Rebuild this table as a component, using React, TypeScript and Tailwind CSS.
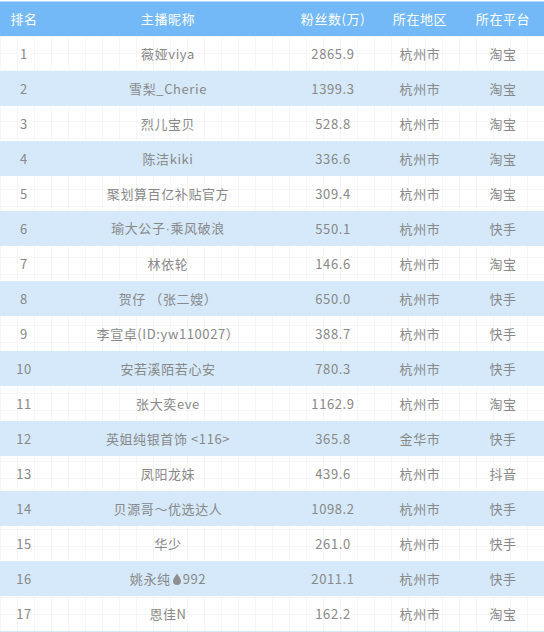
import React from "react";

// 主播排行数据
const rows: [string, React.ReactNode, string, string, string][] = [
  ["1", "薇娅viya", "2865.9", "杭州市", "淘宝"],
  ["2", "雪梨_Cherie", "1399.3", "杭州市", "淘宝"],
  ["3", "烈儿宝贝", "528.8", "杭州市", "淘宝"],
  ["4", "陈洁kiki", "336.6", "杭州市", "淘宝"],
  ["5", "聚划算百亿补贴官方", "309.4", "杭州市", "淘宝"],
  [
    "6",
    <>
      瑜大公子<span style={{ fontFamily: '"Liberation Sans", sans-serif' }}>·</span>乘风破浪
    </>,
    "550.1",
    "杭州市",
    "快手",
  ],
  ["7", "林依轮", "146.6", "杭州市", "淘宝"],
  ["8", "贺仔 （张二嫂）", "650.0", "杭州市", "快手"],
  ["9", "李宣卓(ID:yw110027）", "388.7", "杭州市", "快手"],
  ["10", "安若溪陌若心安", "780.3", "杭州市", "快手"],
  ["11", "张大奕eve", "1162.9", "杭州市", "淘宝"],
  ["12", "英姐纯银首饰 <116>", "365.8", "金华市", "快手"],
  ["13", "凤阳龙妹", "439.6", "杭州市", "抖音"],
  ["14", "贝源哥～优选达人", "1098.2", "杭州市", "快手"],
  ["15", "华少", "261.0", "杭州市", "快手"],
  [
    "16",
    <>
      姚永纯
      <svg viewBox="0 0 10 12" className="inline-block w-[10px] h-[12px] mx-[1px] -mt-[2px] align-middle">
        <path d="M5 0.5 C6.5 3 9 5.5 9 8 A4 4 0 0 1 1 8 C1 5.5 3.5 3 5 0.5 Z" fill="#8f8f8f" />
      </svg>
      992
    </>,
    "2011.1",
    "杭州市",
    "快手",
  ],
  ["17", "恩佳N", "162.2", "杭州市", "淘宝"],
];

const headers = ["排名", "主播昵称", "粉丝数(万)", "所在地区", "所在平台"];
const cols = "grid grid-cols-[48px_240px_90px_84px_82px]";

export default function App() {
  return (
    <div
      className="w-[544px] h-[632px] overflow-hidden bg-white pt-[1px] text-[13px] tracking-[0.6px]"
      style={{ fontFamily: '"Noto Sans CJK SC", "Microsoft YaHei", sans-serif' }}
    >
      <div className="border-t border-[#b5d9fa]">
        <div className={`${cols} h-[34px] items-center bg-[#74b9f7] text-white`}>
          {headers.map((h) => (
            <div key={h} className="text-center">
              {h}
            </div>
          ))}
        </div>
        <div className="bg-[linear-gradient(to_right,#f6f6f6_1px,transparent_1px),linear-gradient(to_bottom,#f7f7f7_1px,transparent_1px)] bg-[size:17px_17px] border-b-2 border-[#d6e9fb]">
          {rows.map((r, i) => (
            <div
              key={r[0]}
              className={`${cols} h-[35px] items-center text-[#888888] ${i % 2 === 1 ? "bg-[#d5e9fb]" : ""}`}
            >
              <div className="text-center">{r[0]}</div>
              <div className="text-center whitespace-nowrap">{r[1]}</div>
              <div className="text-center">{r[2]}</div>
              <div className="text-center">{r[3]}</div>
              <div className="text-center">{r[4]}</div>
            </div>
          ))}
        </div>
      </div>
    </div>
  );
}
